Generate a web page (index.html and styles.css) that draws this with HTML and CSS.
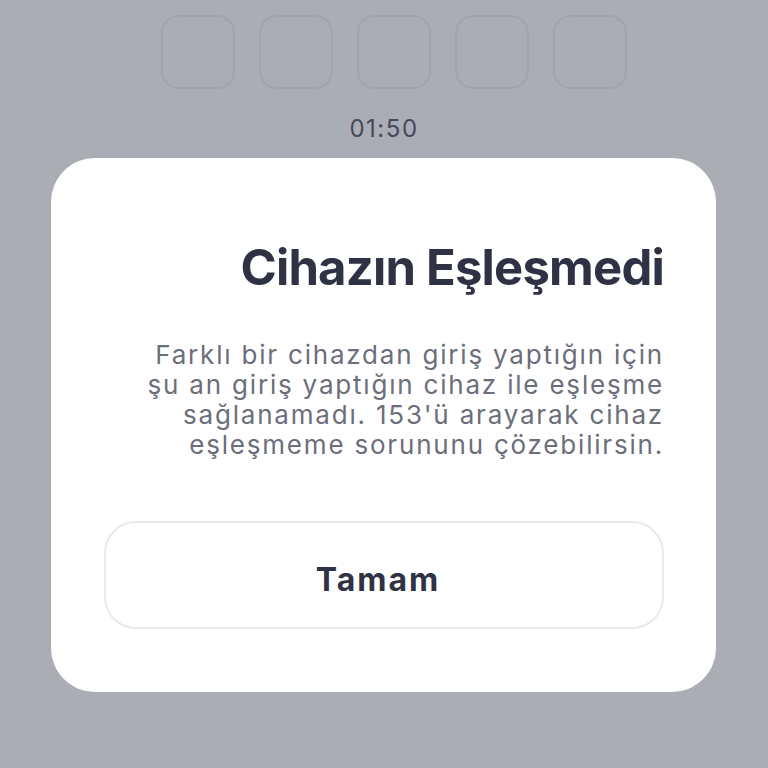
FILE: index.html
```html
<!DOCTYPE html>
<html lang="tr">
<head>
<meta charset="utf-8">
<link rel="stylesheet" href="styles.css">
</head>
<body>
<div class="screen">
  <div class="codes">
    <div class="code"></div>
    <div class="code"></div>
    <div class="code"></div>
    <div class="code"></div>
    <div class="code"></div>
  </div>
  <div class="timer">01:50</div>
  <div class="card">
    <h1 class="title">Cihazın Eşleşmedi</h1>
    <p class="desc">Farklı bir cihazdan giriş yaptığın için<br>şu an giriş yaptığın cihaz ile eşleşme<br>sağlanamadı. 153'ü arayarak cihaz<br>eşleşmeme sorununu çözebilirsin.</p>
    <button class="btn">Tamam</button>
  </div>
</div>
</body>
</html>
```

FILE: styles.css
```css
html, body {
  margin: 0;
  padding: 0;
}
body {
  width: 768px;
  height: 768px;
  overflow: hidden;
  background: #abadb5;
  font-family: "Inter", "Noto Sans", sans-serif;
}
.screen {
  display: flex;
  flex-direction: column;
  align-items: flex-start;
}
.codes {
  display: flex;
  gap: 24px;
  margin-top: 15px;
  margin-left: 161px;
}
.code {
  width: 70px;
  height: 70px;
  border: 2px solid #a2a4ad;
  border-radius: 18px;
}
.timer {
  align-self: center;
  margin-top: 26px;
  font-size: 24px;
  line-height: 28px;
  letter-spacing: 1.5px;
  color: #474a58;
}
.card {
  box-sizing: border-box;
  margin-top: 15px;
  margin-left: 51px;
  width: 665px;
  height: 534px;
  background: #ffffff;
  border-radius: 44px;
  padding: 82px 52px 0 53px;
  display: flex;
  flex-direction: column;
  align-items: stretch;
}
.title {
  margin: 0;
  text-align: right;
  font-size: 49px;
  line-height: 56px;
  font-weight: 700;
  letter-spacing: -0.8px;
  color: #2f3244;
}
.desc {
  margin: 44px 0 0 0;
  text-align: right;
  font-size: 26px;
  line-height: 30px;
  font-weight: 400;
  letter-spacing: 1.8px;
  color: #6b6e7b;
}
.btn {
  box-sizing: border-box;
  margin-top: 61px;
  height: 108px;
  padding: 8px 18px 0 6px;
  border: 2px solid #e9e9eb;
  border-radius: 32px;
  background: #ffffff;
  font-family: inherit;
  font-size: 32px;
  font-weight: 700;
  letter-spacing: 2px;
  color: #2f3244;
}
```
